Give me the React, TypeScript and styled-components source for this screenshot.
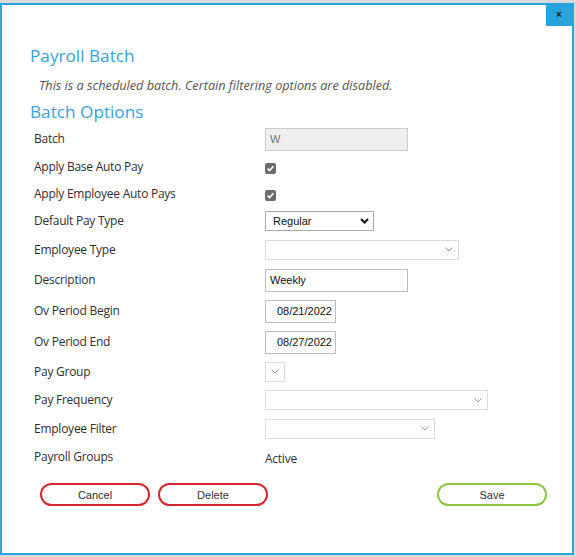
import React from 'react';
import styled, { createGlobalStyle } from 'styled-components';

const GlobalStyle = createGlobalStyle`
  html, body {
    margin: 0;
    padding: 0;
    background: #dadada;
  }
  * {
    box-sizing: border-box;
  }
`;

const Page = styled.div`
  height: 557px;
  padding: 3px 2px 2px 0;
`;

const Dialog = styled.div`
  position: relative;
  height: 552px;
  background: #fff;
  border: 2px solid #2aa5dd;
  padding: 40px 28px 0 28px;
  font-family: 'Open Sans', 'Noto Sans', sans-serif;
`;

const CloseButton = styled.button`
  position: absolute;
  top: -2px;
  right: 0;
  width: 26px;
  height: 23px;
  border: 0;
  padding: 0;
  background: #27a4dd;
  color: #1b1b1b;
  font: bold 10px 'Liberation Sans', Arial, sans-serif;
  line-height: 23px;
  cursor: pointer;
`;

const Title = styled.h2`
  margin: 0;
  font-size: 17.2px;
  line-height: 22px;
  font-weight: 400;
  color: #3b9fd9;
`;

const Notice = styled.p`
  margin: 9px 0 7px 9px;
  font-size: 12.7px;
  line-height: 18px;
  font-style: italic;
  color: #555;
`;

const Form = styled.div`
  margin-top: 1px;
  padding-left: 4px;
  display: flex;
  flex-direction: column;
`;

const Row = styled.div<{ h: number }>`
  display: grid;
  grid-template-columns: 231px 1fr;
  align-items: center;
  height: ${({ h }) => h}px;
`;

const Label = styled.span`
  font-size: 12px;
  line-height: 20px;
  letter-spacing: -0.25px;
  color: #2f2f2f;
`;

const Value = styled.span`
  font-size: 12px;
  line-height: 20px;
  letter-spacing: -0.25px;
  color: #2f2f2f;
`;

const TextBox = styled.input<{ w: number; align?: 'left' | 'right' }>`
  width: ${({ w }) => w}px;
  height: 23px;
  margin: 0;
  padding: 0 ${({ align }) => (align === 'right' ? '3px' : '4px')};
  text-align: ${({ align }) => align || 'left'};
  border: 1px solid #bcbcbc;
  border-radius: 0;
  background: #fff;
  color: #111;
  font: 11px 'Liberation Sans', Arial, sans-serif;
  outline: none;
  &:disabled {
    background: #efefef;
    border-color: #cbcbcb;
    color: #6e6e6e;
  }
`;

const Check = styled.span`
  display: inline-flex;
  align-items: center;
  justify-content: center;
  width: 11px;
  height: 11px;
  border-radius: 2px;
  background: #6c6c6c;
`;

const SelectBox = styled.div<{ w: number; disabled?: boolean }>`
  display: flex;
  align-items: center;
  justify-content: space-between;
  width: ${({ w }) => w}px;
  height: 20px;
  padding: 0 ${({ disabled }) => (disabled ? '5px' : '4px')} 0 7px;
  border: 1px solid ${({ disabled }) => (disabled ? '#dcdcdc' : '#a9a9a9')};
  background: #fff;
  color: #111;
  font: 11px 'Liberation Sans', Arial, sans-serif;
`;

const ButtonBar = styled.div`
  display: flex;
  align-items: center;
  margin: 12px -3px 0 10px;
`;

const PillButton = styled.button<{ tone: 'danger' | 'ok' }>`
  width: 110px;
  height: 23px;
  margin-right: 8px;
  padding: 0;
  border: 2px solid ${({ tone }) => (tone === 'danger' ? '#d7262f' : '#8cc63f')};
  border-radius: 12px;
  background: #fff;
  color: #333;
  font: 11px 'Liberation Sans', Arial, sans-serif;
  cursor: pointer;
  &:last-child {
    margin-left: auto;
    margin-right: 0;
  }
`;

const Chevron = ({ dark }: { dark?: boolean }) =>
  dark ? (
    <svg width="9" height="6" viewBox="0 0 9 6">
      <path d="M1 1 L4.5 4.5 L8 1" fill="none" stroke="#111" strokeWidth="2" />
    </svg>
  ) : (
    <svg width="8" height="5" viewBox="0 0 8 5">
      <path d="M0.5 0.5 L4 4 L7.5 0.5" fill="none" stroke="#9a9a9a" strokeWidth="1" />
    </svg>
  );

const Checked = () => (
  <Check>
    <svg width="9" height="9" viewBox="0 0 9 9">
      <path d="M1.6 4.6 L3.6 6.5 L7.4 2.2" fill="none" stroke="#fff" strokeWidth="1.6" />
    </svg>
  </Check>
);

type Field = { label: string; h: number; control: React.ReactNode };

const fields: Field[] = [
  { label: 'Batch', h: 29, control: <TextBox w={143} defaultValue="W" disabled /> },
  { label: 'Apply Base Auto Pay', h: 27, control: <Checked /> },
  { label: 'Apply Employee Auto Pays', h: 27, control: <Checked /> },
  {
    label: 'Default Pay Type',
    h: 28,
    control: (
      <SelectBox w={109}>
        <span>Regular</span>
        <Chevron dark />
      </SelectBox>
    ),
  },
  {
    label: 'Employee Type',
    h: 29,
    control: (
      <SelectBox w={194} disabled>
        <span />
        <Chevron />
      </SelectBox>
    ),
  },
  { label: 'Description', h: 31, control: <TextBox w={143} defaultValue="Weekly" /> },
  { label: 'Ov Period Begin', h: 31, control: <TextBox w={71} align="right" defaultValue="08/21/2022" /> },
  { label: 'Ov Period End', h: 31, control: <TextBox w={71} align="right" defaultValue="08/27/2022" /> },
  {
    label: 'Pay Group',
    h: 29,
    control: (
      <SelectBox w={20} disabled style={{ padding: '0 0 0 5px' }}>
        <Chevron />
      </SelectBox>
    ),
  },
  {
    label: 'Pay Frequency',
    h: 28,
    control: (
      <SelectBox w={223} disabled>
        <span />
        <Chevron />
      </SelectBox>
    ),
  },
  {
    label: 'Employee Filter',
    h: 29,
    control: (
      <SelectBox w={170} disabled>
        <span />
        <Chevron />
      </SelectBox>
    ),
  },
  { label: 'Payroll Groups', h: 28, control: <Value>Active</Value> },
];

export default function App() {
  return (
    <Page>
      <GlobalStyle />
      <Dialog>
        <CloseButton aria-label="Close">×</CloseButton>
        <Title>Payroll Batch</Title>
        <Notice>This is a scheduled batch. Certain filtering options are disabled.</Notice>
        <Title>Batch Options</Title>
        <Form>
          {fields.map((f) => (
            <Row key={f.label} h={f.h}>
              <Label>{f.label}</Label>
              <div>{f.control}</div>
            </Row>
          ))}
        </Form>
        <ButtonBar>
          <PillButton tone="danger">Cancel</PillButton>
          <PillButton tone="danger">Delete</PillButton>
          <PillButton tone="ok">Save</PillButton>
        </ButtonBar>
      </Dialog>
    </Page>
  );
}
